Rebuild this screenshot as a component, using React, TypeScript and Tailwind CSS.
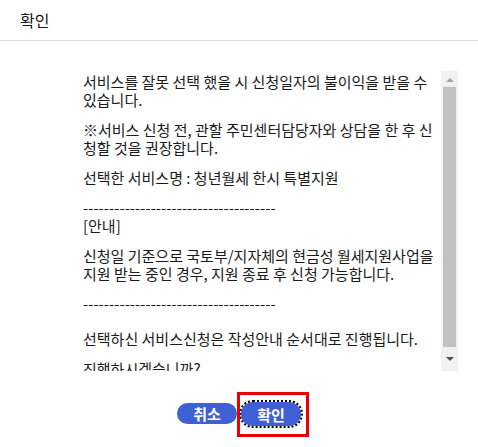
import React from "react";

const paragraphs: string[][] = [
  ["서비스를 잘못 선택 했을 시 신청일자의 불이익을 받을 수", "있습니다."],
  ["※서비스 신청 전, 관할 주민센터담당자와 상담을 한 후 신", "청할 것을 권장합니다."],
  ["선택한 서비스명 : 청년월세 한시 특별지원"],
  ["-------------------------------------", "[안내]"],
  ["신청일 기준으로 국토부/지자체의 현금성 월세지원사업을", "지원 받는 중인 경우, 지원 종료 후 신청 가능합니다."],
  ["-------------------------------------"],
  ["선택하신 서비스신청은 작성안내 순서대로 진행됩니다."],
  ["진행하시겠습니까?"],
];

const App = () => {
  return (
    <div className="w-[478px] h-[447px] bg-white text-[#1a1a1a] font-['Noto_Sans_CJK_KR','Noto_Sans',sans-serif] overflow-hidden">
      <div className="h-[41px] border-b border-[#dddddd] px-5 flex items-center text-[16px]">
        확인
      </div>

      <div className="mt-[30px] ml-[80px] w-[378px] h-[300px] flex">
        <div className="flex-1 overflow-hidden pl-[3px] pt-[2px] text-[15px] leading-[18px]">
          {paragraphs.map((lines, i) => (
            <p key={i} className={i === 5 ? "mb-[17px]" : "mb-[12px]"}>
              {lines.map((line, j) => (
                <span key={j} className="block whitespace-nowrap">
                  {line}
                </span>
              ))}
            </p>
          ))}
        </div>

        <div className="w-[17px] bg-[#f1f1f1] flex flex-col">
          <div className="h-[16px] flex items-center justify-center">
            <svg width="8" height="5" viewBox="0 0 8 5">
              <path d="M0 5 L4 1 L8 5 Z" fill="#a3a3a3" />
            </svg>
          </div>
          <div className="mx-[2px] h-[260px] bg-[#c1c1c1]" />
          <div className="flex-1 flex items-center justify-center">
            <svg width="8" height="5" viewBox="0 0 8 5">
              <path d="M0 0 L8 0 L4 4 Z" fill="#505050" />
            </svg>
          </div>
        </div>
      </div>

      <div className="mt-[32px] flex justify-center gap-[4px]">
        <button className="w-[60px] h-[21px] rounded-full bg-[#3f5fd4] text-white font-bold text-[15px] leading-none flex items-center justify-center">
          취소
        </button>
        <div className="relative">
          <button className="w-[60px] h-[24px] -mt-[1px] rounded-full bg-[#3f5fd4] text-white font-bold text-[15px] leading-none flex items-center justify-center outline-2 outline-dotted outline-black">
            확인
          </button>
          <span className="absolute -left-[4px] -top-[11px] w-[72px] h-[45px] border-[3px] border-[#ee0000]" />
        </div>
      </div>
    </div>
  );
};

export default App;
